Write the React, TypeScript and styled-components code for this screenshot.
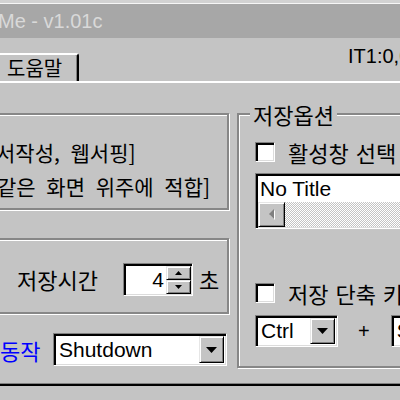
import React from "react";
import styled, { createGlobalStyle, css } from "styled-components";

const FACE = "#c4c4c4";
const KR = `"Noto Sans CJK KR", "Noto Sans", sans-serif`;
const LAT = `"Liberation Sans", Arial, sans-serif`;

const GlobalStyle = createGlobalStyle`
  *, *::before, *::after { box-sizing: border-box; }
  html, body { margin: 0; padding: 0; }
  body {
    width: 400px;
    height: 400px;
    overflow: hidden;
    background: ${FACE};
    font-family: ${KR};
    color: #000;
  }
`;

const sunken = css`
  border-style: solid;
  border-width: 1px;
  border-color: #808080 #ffffff #ffffff #808080;
  box-shadow: inset 2px 2px 0 #000, inset -1px -1px 0 #dcdcdc;
`;

const raised = css`
  background: ${FACE};
  border-style: solid;
  border-width: 1px;
  border-color: #e6e6e6 #000 #000 #e6e6e6;
  box-shadow: inset 1px 1px 0 #fff, inset -1px -1px 0 #808080;
`;

const etched = css`
  border: 2px solid #878787;
  box-shadow: inset 1px 1px 0 #fff, 1px 1px 0 #fff;
`;

const Window = styled.div`
  margin-left: -24px;
  width: 448px;
  height: 400px;
  background: ${FACE};
  border-top: 3px solid #d2d2d2;
  display: flex;
  flex-direction: column;
`;

const TitleBar = styled.div`
  flex: none;
  height: 35px;
  border-top: 1px solid #f6f6f6;
  background: #a7a7a7;
  display: flex;
  align-items: center;
  padding-left: 22px;
  font-family: ${LAT};
  font-size: 20px;
  color: #d9d9d9;
  white-space: nowrap;
`;

const TabRow = styled.div`
  flex: none;
  height: 43px;
  display: flex;
  align-items: flex-end;
  padding-left: 20px;
`;

const Tab = styled.div`
  flex: none;
  width: 83px;
  height: 28px;
  border-top: 2px solid #fff;
  border-left: 2px solid #fff;
  border-right: 2px solid #000;
  border-top-right-radius: 3px;
  box-shadow: inset -1px 0 0 #808080;
  padding-left: 9px;
  display: flex;
  align-items: center;
  font-size: 20px;
  line-height: 22px;
  white-space: nowrap;
`;

const Status = styled.div`
  align-self: flex-start;
  margin-top: 8px;
  margin-left: 269px;
  font-family: ${LAT};
  font-size: 20px;
  line-height: 20px;
  white-space: nowrap;
`;

const Panel = styled.div`
  flex: none;
  height: 305px;
  border-top: 2px solid #fff;
  border-bottom: 2px solid #000;
  box-shadow: inset 0 -1px 0 #808080;
  padding: 30px 10px 0 10px;
  display: flex;
  gap: 8px;
`;

const LeftCol = styled.div`
  flex: none;
  width: 243px;
  display: flex;
  flex-direction: column;
`;

const RightCol = styled.div`
  flex: 1;
  min-width: 0;
  display: flex;
  flex-direction: column;
`;

const DescGroup = styled.div`
  ${etched}
  height: 97px;
  padding: 20px 0 0 12px;
  font-size: 21px;
  line-height: 34px;
  word-spacing: 6px;
  white-space: nowrap;
  overflow: hidden;
`;

const DescLine = styled.div<{ $indent?: number }>`
  margin-left: ${(p) => p.$indent ?? 0}px;
`;

const TimeGroup = styled.div`
  ${etched}
  margin-top: 28px;
  height: 76px;
  padding: 6px 0 0 29px;
  display: flex;
  align-items: center;
`;

const Label = styled.span<{ $color?: string; $width?: number }>`
  flex: none;
  width: ${(p) => (p.$width ? `${p.$width}px` : "auto")};
  font-size: 22px;
  line-height: 24px;
  word-spacing: 2px;
  color: ${(p) => p.$color ?? "#000"};
  white-space: nowrap;
`;

const SpinBox = styled.div`
  ${sunken}
  flex: none;
  margin-left: 23px;
  width: 70px;
  height: 33px;
  background: #fff;
  padding: 2px 1px 1px 2px;
  display: flex;
`;

const SpinValue = styled.div`
  flex: 1;
  text-align: right;
  padding-right: 2px;
  font-family: ${LAT};
  font-size: 21px;
  line-height: 28px;
`;

const SpinButtons = styled.div`
  flex: none;
  width: 25px;
  display: flex;
  flex-direction: column;
`;

const SpinButton = styled.div`
  ${raised}
  flex: 1;
  display: flex;
  align-items: center;
  justify-content: center;
`;

const Unit = styled(Label)`
  margin-left: 6px;
`;

const ActionRow = styled.div`
  margin-top: 19px;
  height: 33px;
  padding-left: 14px;
  display: flex;
  align-items: center;
`;

const Combo = styled.div<{ $width: number; $height: number; $gap: number }>`
  ${sunken}
  flex: none;
  margin-left: ${(p) => p.$gap}px;
  width: ${(p) => p.$width}px;
  height: ${(p) => p.$height}px;
  background: #fff;
  padding: 2px;
  display: flex;
  align-items: stretch;
`;

const ComboText = styled.div`
  flex: 1;
  padding-left: 3px;
  font-family: ${LAT};
  font-size: 21px;
  display: flex;
  align-items: center;
  white-space: nowrap;
  overflow: hidden;
`;

const DropButton = styled.div`
  ${raised}
  flex: none;
  width: 25px;
  display: flex;
  align-items: center;
  justify-content: center;
`;

const OptionsGroup = styled.div`
  ${etched}
  position: relative;
  height: 255px;
  padding: 27px 0 0 16px;
  display: flex;
  flex-direction: column;
  align-items: flex-start;
`;

const Legend = styled.div`
  position: absolute;
  top: -12px;
  left: 11px;
  padding: 0 3px;
  background: ${FACE};
  font-size: 22px;
  line-height: 22px;
  white-space: nowrap;
`;

const CheckRow = styled.div<{ $top: number }>`
  margin-top: ${(p) => p.$top}px;
  height: 20px;
  display: flex;
  align-items: center;
  white-space: nowrap;
`;

const CheckBox = styled.div`
  ${sunken}
  flex: none;
  width: 20px;
  height: 20px;
  background: #fff;
  margin-right: 13px;
`;

const ListBox = styled.div`
  ${sunken}
  margin-top: 11px;
  width: 220px;
  height: 56px;
  background: #fff;
  padding: 2px 1px 1px 2px;
  display: flex;
  flex-direction: column;
`;

const ListItem = styled.div`
  height: 26px;
  padding-left: 2px;
  font-family: ${LAT};
  font-size: 21px;
  line-height: 26px;
  white-space: nowrap;
`;

const HScroll = styled.div`
  height: 25px;
  display: flex;
`;

const ScrollButton = styled.div`
  ${raised}
  flex: none;
  width: 27px;
  display: flex;
  align-items: center;
  justify-content: center;
`;

const ScrollTrack = styled.div`
  flex: 1;
  background: repeating-conic-gradient(#ffffff 0% 25%, ${FACE} 0% 50%) 0 0 / 2px 2px;
`;

const KeyRow = styled.div`
  margin-top: 12px;
  height: 32px;
  display: flex;
  align-items: center;
`;

const Plus = styled.span`
  margin-left: 20px;
  font-family: ${LAT};
  font-size: 20px;
`;

const DownArrow = () => (
  <svg width="11" height="6" viewBox="0 0 11 6">
    <path d="M0 0h11L5.5 6z" fill="#000" />
  </svg>
);

const SpinArrow = ({ up }: { up?: boolean }) => (
  <svg width="7" height="4" viewBox="0 0 7 4">
    <path d={up ? "M0 4h7L3.5 0z" : "M0 0h7L3.5 4z"} fill="#000" />
  </svg>
);

const LeftArrowDisabled = () => (
  <svg width="8" height="12" viewBox="0 0 8 12">
    <path d="M7 1v10L2 6z" fill="#ffffff" />
    <path d="M6 0v10L1 5z" fill="#808080" />
  </svg>
);

export default function App() {
  return (
    <>
      <GlobalStyle />
      <Window>
        <TitleBar>Me - v1.01c</TitleBar>
        <TabRow>
          <Tab>도움말</Tab>
          <Status>IT1:0,0</Status>
        </TabRow>
        <Panel>
          <LeftCol>
            <DescGroup>
              <DescLine $indent={-4}>서작성, 웹서핑]</DescLine>
              <DescLine $indent={-3}>같은 화면 위주에 적합]</DescLine>
            </DescGroup>
            <TimeGroup>
              <Label $width={83}>저장시간</Label>
              <SpinBox>
                <SpinValue>4</SpinValue>
                <SpinButtons>
                  <SpinButton>
                    <SpinArrow up />
                  </SpinButton>
                  <SpinButton>
                    <SpinArrow />
                  </SpinButton>
                </SpinButtons>
              </SpinBox>
              <Unit>초</Unit>
            </TimeGroup>
            <ActionRow>
              <Label $color="#0000ff" $width={40}>동작</Label>
              <Combo $width={174} $height={33} $gap={13}>
                <ComboText>Shutdown</ComboText>
                <DropButton>
                  <DownArrow />
                </DropButton>
              </Combo>
            </ActionRow>
          </LeftCol>
          <RightCol>
            <OptionsGroup>
              <Legend>저장옵션</Legend>
              <CheckRow $top={0}>
                <CheckBox />
                <Label>활성창 선택</Label>
              </CheckRow>
              <ListBox>
                <ListItem>No Title</ListItem>
                <HScroll>
                  <ScrollButton>
                    <LeftArrowDisabled />
                  </ScrollButton>
                  <ScrollTrack />
                </HScroll>
              </ListBox>
              <CheckRow $top={54}>
                <CheckBox />
                <Label>저장 단축 키</Label>
              </CheckRow>
              <KeyRow>
                <Combo $width={83} $height={32} $gap={0}>
                  <ComboText>Ctrl</ComboText>
                  <DropButton>
                    <DownArrow />
                  </DropButton>
                </Combo>
                <Plus>+</Plus>
                <Combo $width={100} $height={32} $gap={21}>
                  <ComboText>S</ComboText>
                  <DropButton>
                    <DownArrow />
                  </DropButton>
                </Combo>
              </KeyRow>
            </OptionsGroup>
          </RightCol>
        </Panel>
      </Window>
    </>
  );
}
